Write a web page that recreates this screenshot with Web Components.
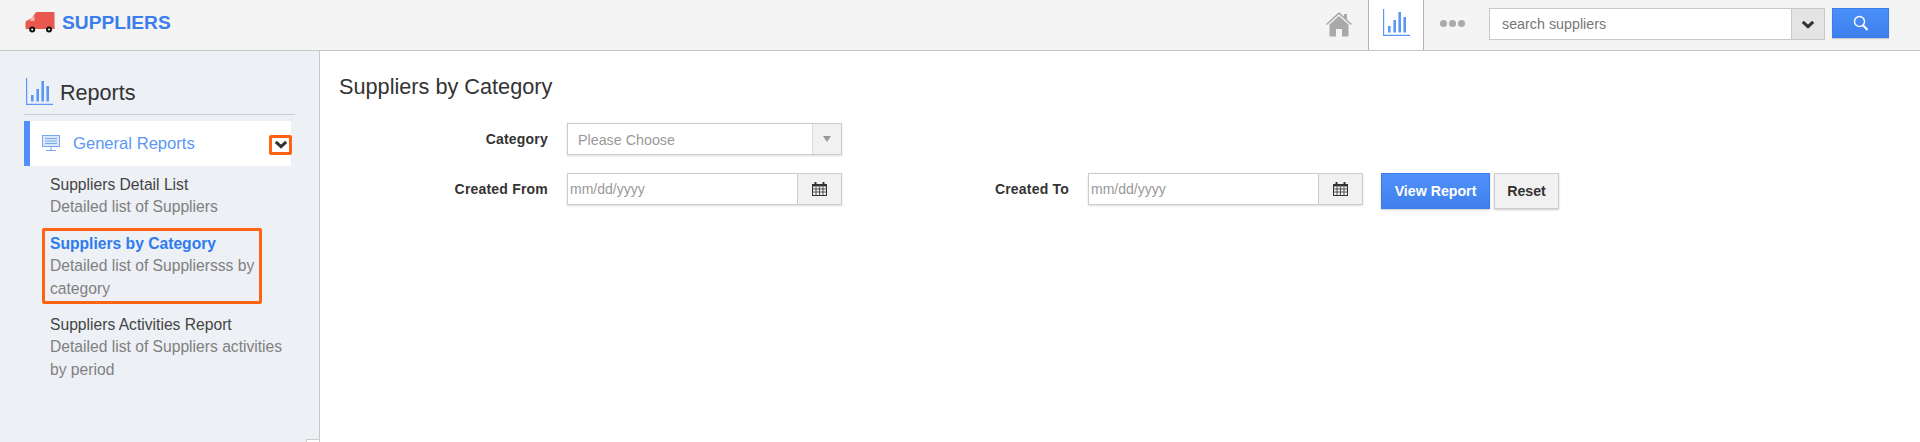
<!DOCTYPE html>
<html>
<head>
<meta charset="utf-8">
<title>Suppliers by Category</title>
<style>
    html, body { margin: 0; padding: 0; height: 100%; background: #fff; overflow: hidden; }
    body { font-family: "Liberation Sans", Arial, sans-serif; display: flex; flex-direction: column; height: 442px; }
</style>
</head>
<body>
<app-header></app-header>
<div style="display:flex;flex:1;min-height:0">
    <side-nav>
        <nav-item title="Suppliers Detail List" text="Detailed list of Suppliers"></nav-item>
        <nav-item active title="Suppliers by Category" text="Detailed list of Suppliersss by category"></nav-item>
        <nav-item title="Suppliers Activities Report" text="Detailed list of Suppliers activities by period"></nav-item>
    </side-nav>
    <report-form></report-form>
</div>

<script>
const CHART = `
    <svg width="27" height="27" viewBox="0 0 27 27" fill="none" style="flex:none">
        <path d="M0.6 0V26.4H27" stroke="#5b97f5" stroke-width="1.2"/>
        <g fill="#5b97f5">
            <rect x="5" y="17" width="2.6" height="6.5"/>
            <rect x="10.400" y="11" width="2.6" height="12.5"/>
            <rect x="15.400" y="3" width="2.6" height="20.5"/>
            <rect x="20.400" y="8" width="2.6" height="15.5"/>
        </g>
    </svg>`;

const CHEVRON = `
    <svg width="14" height="9" viewBox="0 0 14 9" fill="none">
        <path d="M1.8 1.8L7 6.6L12.2 1.8" stroke="#333" stroke-width="3"/>
    </svg>`;

class AppHeader extends HTMLElement {
    constructor() {
        super();
        this.attachShadow({ mode: "open" });
    }

    connectedCallback() {
        this.shadowRoot.innerHTML = `
            <style>
                :host {
                    display: flex;
                    align-items: stretch;
                    height: 50px;
                    flex: none;
                    background: #f4f4f4;
                    border-bottom: 1px solid #c8c8c8;
                }
                .brand {
                    display: flex;
                    align-items: center;
                    gap: 7px;
                    margin-left: 25px;
                    margin-right: auto;
                    padding-bottom: 5px;
                    color: #3b7ded;
                    font-size: 19.2px;
                    font-weight: bold;
                }
                .home { padding-top: 12px; margin-right: 16px; }
                .tab {
                    display: flex;
                    justify-content: center;
                    width: 54px;
                    padding-top: 9px;
                    box-sizing: content-box;
                    background: #fff;
                    border-left: 1px solid #b4b4b4;
                    border-right: 1px solid #b4b4b4;
                }
                .dots { display: flex; gap: 2px; margin: 20px 24px 0 16px; }
                .dots i { width: 7px; height: 7px; border-radius: 50%; background: #aaa; }
                .search { display: flex; align-items: flex-start; margin: 8px 31px 0 0; }
                .box {
                    display: flex;
                    height: 32px;
                    width: 336px;
                    box-sizing: border-box;
                    background: #fff;
                    border: 1px solid #c8c8c8;
                }
                .box span { flex: 1; padding-left: 12px; font-size: 14.3px; line-height: 30px; color: #777; }
                .box b {
                    display: flex;
                    align-items: center;
                    justify-content: center;
                    width: 32px;
                    background: #e4e4e4;
                    border-left: 1px solid #c8c8c8;
                }
                button {
                    display: flex;
                    align-items: center;
                    justify-content: center;
                    width: 57px;
                    height: 30px;
                    margin-left: 7px;
                    padding: 0;
                    background: linear-gradient(#4a8ff8, #3f80ec);
                    border: 1px solid #3b7ded;
                    box-shadow: 0 1px 1px #ccc;
                }
            </style>
            <div class="brand">
                <svg width="30" height="21" viewBox="0 0 30 21">
                    <path d="M7 6L10.500 0.8Q11 0 12 0H28.500Q29.500 0 29.500 1V17H1.500Q0.500 17 0.500 16V10.500Q0.500 9.500 1.200 9Z" fill="#e8584f"/>
                    <path d="M4.800 9L7.800 4.500H9.500V9Z" fill="#f6b5ae"/>
                    <circle cx="7.200" cy="17.500" r="3" fill="#111"/><circle cx="7.200" cy="17.500" r="1" fill="#fff"/>
                    <circle cx="24" cy="17.500" r="3" fill="#111"/><circle cx="24" cy="17.500" r="1" fill="#fff"/>
                </svg>
                <span>SUPPLIERS</span>
            </div>
            <div class="home">
                <svg width="26" height="25" viewBox="0 0 26 25">
                    <path d="M13 0L18 4.600V2H21V7.400L26 12L25 13L13 2.200L1 13L0 12Z" fill="#a9a9a9"/>
                    <path d="M13 4L22.500 12.500V24.500H16V17H10V24.500H3.500V12.500Z" fill="#a9a9a9"/>
                </svg>
            </div>
            <div class="tab">${CHART}</div>
            <div class="dots"><i></i><i></i><i></i></div>
            <div class="search">
                <div class="box"><span>search suppliers</span><b>${CHEVRON}</b></div>
                <button>
                    <svg width="16" height="16" viewBox="0 0 16 16" fill="none" stroke="#fff">
                        <circle cx="6.500" cy="6.500" r="5" stroke-width="1.400"/>
                        <path d="M10 10.200L14.500 15" stroke-width="2"/>
                    </svg>
                </button>
            </div>`;
    }
}

class SideNav extends HTMLElement {
    constructor() {
        super();
        this.attachShadow({ mode: "open" });
    }

    connectedCallback() {
        this.shadowRoot.innerHTML = `
            <style>
                :host {
                    display: block;
                    position: relative;
                    flex: none;
                    width: 320px;
                    box-sizing: border-box;
                    padding: 0 24px;
                    background: #edf0f5;
                    border-right: 1px solid #c8c8c8;
                }
                h2 {
                    display: flex;
                    align-items: flex-start;
                    gap: 7px;
                    height: 64px;
                    margin: 0;
                    padding: 27px 0 0 2px;
                    box-sizing: border-box;
                    border-bottom: 1px solid #ccc;
                    font-size: 21.6px;
                    line-height: 27px;
                    font-weight: normal;
                    color: #333;
                }
                h2 span { padding-top: 1px; }
                .group {
                    display: flex;
                    align-items: center;
                    width: 267px;
                    height: 45px;
                    margin-top: 6px;
                    box-sizing: border-box;
                    background: #fff;
                    border-left: 6px solid #4f8ff7;
                    color: #5b97f5;
                    font-size: 16.6px;
                }
                .group > svg { margin: 0 13px 0 12px; }
                .toggle {
                    display: flex;
                    align-items: center;
                    justify-content: center;
                    box-sizing: border-box;
                    width: 23px;
                    height: 20px;
                    margin: 2px -1px 0 auto;
                    border: 3px solid #ff6210;
                    border-radius: 2px;
                }
                .items { display: flex; flex-direction: column; gap: 14px; margin-top: 8px; padding-left: 26px; }
                .corner {
                    position: absolute;
                    right: -1px;
                    bottom: 0;
                    width: 12px;
                    height: 2px;
                    background: #fff;
                    border: 1px solid #ccc;
                    border-bottom: 0;
                }
            </style>
            <h2>${CHART}<span>Reports</span></h2>
            <div class="group">
                <svg width="18" height="17" viewBox="0 0 18 17" fill="none" stroke="#7aa9f3">
                    <rect x="0.500" y="0.500" width="17" height="11" fill="#dbe7fb"/>
                    <path d="M3 3.500H15M3 6H15M3 8.500H15M9 12V15M4 15.500H14"/>
                </svg>
                <span>General Reports</span>
                <div class="toggle">${CHEVRON}</div>
            </div>
            <div class="items"><slot></slot></div>
            <div class="corner"></div>`;
    }
}

class NavItem extends HTMLElement {
    constructor() {
        super();
        this.attachShadow({ mode: "open" });
    }

    connectedCallback() {
        this.shadowRoot.innerHTML = `
            <style>
                :host {
                    display: block;
                    position: relative;
                    width: 240px;
                    font-size: 15.65px;
                    line-height: 22.4px;
                }
                .name { color: #444; }
                .text { color: #808080; }
                :host([active]) .name { color: #2f7bf0; font-weight: bold; }
                :host([active])::after {
                    content: "";
                    position: absolute;
                    inset: -5px 28px -4px -8px;
                    border: 3px solid #ff6210;
                    border-radius: 2px;
                }
            </style>
            <div class="name">${this.getAttribute("title")}</div>
            <div class="text">${this.getAttribute("text")}</div>`;
    }
}

class DateField extends HTMLElement {
    constructor() {
        super();
        this.attachShadow({ mode: "open" });
    }

    connectedCallback() {
        this.shadowRoot.innerHTML = `
            <style>
                :host {
                    display: flex;
                    box-sizing: border-box;
                    width: 275px;
                    height: 32px;
                    background: #fff;
                    border: 1px solid #ccc;
                    box-shadow: 0 1px 2px #ddd;
                }
                span { flex: 1; padding-left: 2px; font-size: 14px; line-height: 31px; color: #999; }
                b {
                    display: flex;
                    align-items: center;
                    justify-content: center;
                    width: 43px;
                    background: #f1f1f1;
                    border-left: 1px solid #ccc;
                }
            </style>
            <span>mm/dd/yyyy</span>
            <b>
                <svg width="15" height="14" viewBox="0 0 15 14" fill="none" stroke="#333">
                    <rect x="0.500" y="2.500" width="14" height="11"/>
                    <path d="M0.500 3.500H14.500" stroke-width="2"/>
                    <path d="M3.500 0V3M11.500 0V3" stroke-width="2"/>
                    <path d="M0 7H15M0 10H15M4 5V14M7.500 5V14M11 5V14" stroke-width="0.800"/>
                </svg>
            </b>`;
    }
}

class ReportForm extends HTMLElement {
    constructor() {
        super();
        this.attachShadow({ mode: "open" });
    }

    connectedCallback() {
        this.shadowRoot.innerHTML = `
            <style>
                :host {
                    display: block;
                    flex: 1;
                    padding: 0 0 0 19px;
                    color: #333;
                }
                h1 { margin: 24px 0 0; font-size: 21.7px; line-height: 24px; font-weight: normal; color: #333; }
                .row { display: flex; align-items: flex-start; }
                .row.first { margin-top: 24px; }
                .row.second { margin-top: 18px; }
                label {
                    width: 209px;
                    margin-right: 19px;
                    text-align: right;
                    font-size: 14px;
                    font-weight: bold;
                    line-height: 32px;
                    letter-spacing: 0.2px;
                }
                label.to { width: 227px; }
                .select {
                    display: flex;
                    box-sizing: border-box;
                    width: 275px;
                    height: 32px;
                    background: #fff;
                    border: 1px solid #ccc;
                    box-shadow: 0 1px 2px #ddd;
                }
                .select span { flex: 1; padding-left: 10px; font-size: 14.3px; line-height: 32px; color: #999; }
                .select b {
                    display: flex;
                    align-items: center;
                    justify-content: center;
                    width: 28px;
                    background: #f1f1f1;
                    border-left: 1px solid #ddd;
                }
                .select i { border: 4px solid transparent; border-top: 6px solid #999; border-bottom: 0; }
                button {
                    height: 36px;
                    padding: 0;
                    font: bold 14.2px "Liberation Sans", Arial, sans-serif;
                    box-shadow: 0 1px 2px #ccc;
                }
                .view {
                    width: 109px;
                    margin-left: 18px;
                    color: #fff;
                    background: linear-gradient(#4f90fa, #3f80ec);
                    border: 1px solid #3b7ded;
                }
                .reset {
                    width: 65px;
                    margin-left: 4px;
                    color: #333;
                    background: #f1f1f1;
                    border: 1px solid #ccc;
                }
            </style>
            <h1>Suppliers by Category</h1>
            <div class="row first">
                <label>Category</label>
                <div class="select"><span>Please Choose</span><b><i></i></b></div>
            </div>
            <div class="row second">
                <label>Created From</label>
                <date-field></date-field>
                <label class="to">Created To</label>
                <date-field></date-field>
                <button class="view">View Report</button>
                <button class="reset">Reset</button>
            </div>`;
    }
}

customElements.define("app-header", AppHeader);
customElements.define("nav-item", NavItem);
customElements.define("side-nav", SideNav);
customElements.define("date-field", DateField);
customElements.define("report-form", ReportForm);
</script>
</body>
</html>
